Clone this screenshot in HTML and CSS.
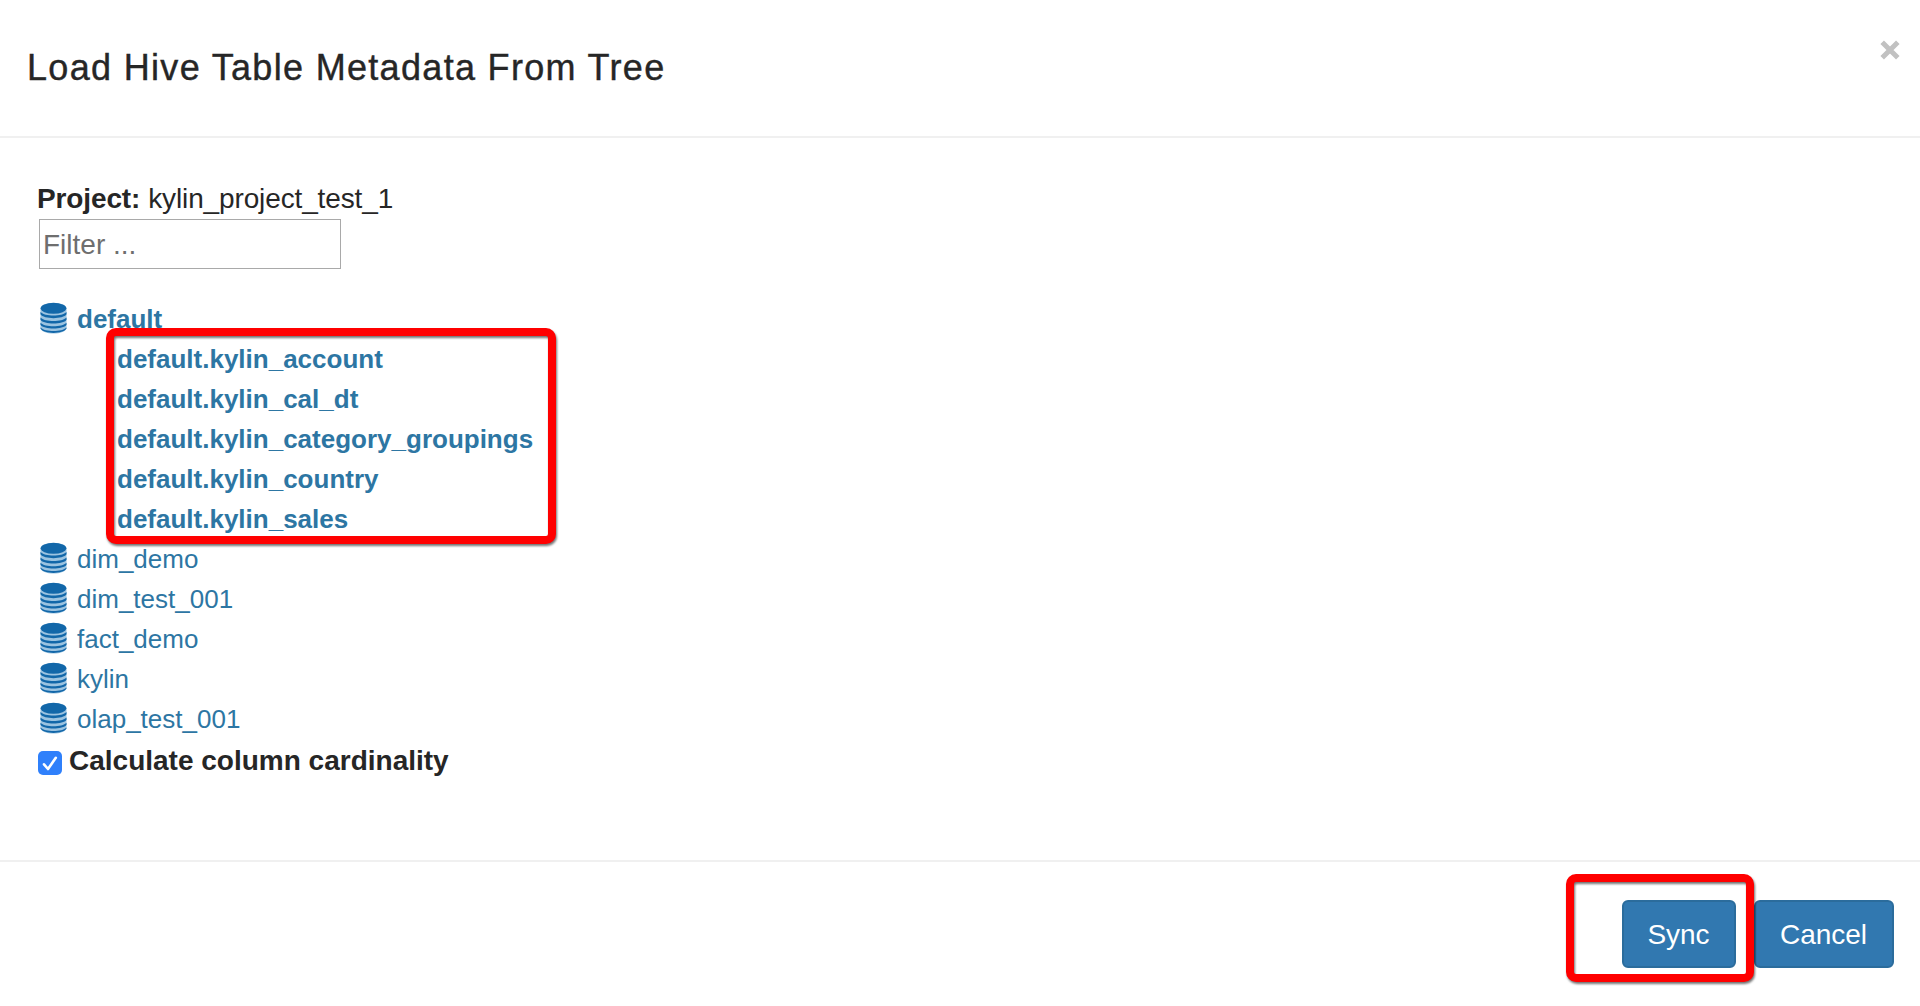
FILE: index.html
```html
<!DOCTYPE html>
<html lang="en">
<head>
<meta charset="utf-8">
<title>Load Hive Table Metadata From Tree</title>
<link rel="stylesheet" href="styles.css">
</head>
<body>
<svg class="defs" aria-hidden="true">
  <symbol id="db" viewBox="0 0 28 32">
    <path fill="#9cc3e0" d="M.5 6C.5-1.500 27.500-1.500 27.500 6V26C27.500 34 .5 34 .5 26Z"/>
    <ellipse cx="14" cy="6" rx="13.300" ry="5.700" fill="#1267a9"/>
    <g fill="#1267a9">
      <path d="M.5 9.800C5 14.700 23 14.700 27.500 9.800V12.200C24 17.500 4 17.500 .5 12.200Z"/>
      <path d="M.5 15.400C5 20.300 23 20.300 27.500 15.400V17.800C24 23.100 4 23.100 .5 17.800Z"/>
      <path d="M.5 20.800C5 25.700 23 25.700 27.500 20.800V23C24 28.300 4 28.300 .5 23Z"/>
      <path d="M.5 25.800C5 30.700 23 30.700 27.500 25.800V27C24 33 4 33 .5 27Z"/>
    </g>
  </symbol>
</svg>
<div class="modal">
  <header class="modal-header">
    <h1 class="title">Load Hive Table Metadata From Tree</h1>
    <button class="close" aria-label="Close"><svg width="20" height="20" viewBox="0 0 20 20"><path d="M2.200 2.200 17.800 17.800M17.800 2.200 2.200 17.800" stroke="#c1c1c1" stroke-width="5"/></svg></button>
  </header>
  <main class="modal-body">
    <div class="project"><b>Project:</b><span>kylin_project_test_1</span></div>
    <input class="filter" type="text" placeholder="Filter ...">
    <ul class="tree">
      <li class="node open"><svg class="db"><use href="#db"/></svg><span>default</span></li>
      <li>
        <ul class="children">
          <li>default.kylin_account</li>
          <li>default.kylin_cal_dt</li>
          <li>default.kylin_category_groupings</li>
          <li>default.kylin_country</li>
          <li>default.kylin_sales</li>
        </ul>
      </li>
      <li class="node"><svg class="db"><use href="#db"/></svg><span>dim_demo</span></li>
      <li class="node"><svg class="db"><use href="#db"/></svg><span>dim_test_001</span></li>
      <li class="node"><svg class="db"><use href="#db"/></svg><span>fact_demo</span></li>
      <li class="node"><svg class="db"><use href="#db"/></svg><span>kylin</span></li>
      <li class="node"><svg class="db"><use href="#db"/></svg><span>olap_test_001</span></li>
    </ul>
    <div class="cardinality">
      <span class="check"><svg width="24" height="24" viewBox="0 0 24 24"><path d="M6 13.300 10 18 17.800 6.800" fill="none" stroke="#fff" stroke-width="2.600" stroke-linecap="round" stroke-linejoin="round"/></svg></span>
      <b>Calculate column cardinality</b>
    </div>
  </main>
  <footer class="modal-footer">
    <div class="sync-wrap"><button class="btn sync">Sync</button></div>
    <button class="btn cancel">Cancel</button>
  </footer>
</div>
</body>
</html>
```

FILE: styles.css
```css
*, *::before, *::after { box-sizing: border-box; }
body {
  margin: 0;
  background: #fff;
  color: #262626;
  font-family: "Liberation Sans", Arial, sans-serif;
  font-size: 28px;
  line-height: 40px;
}
ul { list-style: none; margin: 0; padding: 0; }
.defs { display: none; }
.modal { height: 1006px; display: flex; flex-direction: column; overflow: hidden; }

.modal-header {
  height: 138px;
  flex: none;
  display: flex;
  justify-content: space-between;
  align-items: flex-start;
  padding: 48px 20px 0 27px;
  border-bottom: 2px solid #f0f0f0;
}
.title {
  margin: 0;
  font-size: 36px;
  font-weight: 400;
  letter-spacing: 1.32px;
  white-space: nowrap;
  -webkit-text-stroke: .4px #262626;
}
.close { border: 0; padding: 0; margin-top: -8px; background: none; display: flex; }

.modal-body { flex: none; height: 722px; padding: 41px 38px 0 37px; }
.project { display: flex; gap: 8px; letter-spacing: -.13px; }
.filter {
  display: block;
  width: 302px;
  height: 50px;
  margin: 0 0 30px 2px;
  padding: 1px 3px 0;
  border: 1px solid #a9a9a9;
  border-radius: 0;
  font: inherit;
}
.filter::placeholder { color: #6e6e6e; opacity: 1; }

.tree { color: #2d76a3; font-size: 26px; }
.node { display: flex; height: 40px; gap: 10px; padding-left: 3px; }
.open, .children { font-weight: 700; }
.db { width: 27px; height: 32px; margin-top: 3px; }
.children { position: relative; padding-left: 80px; }
.children li { height: 40px; }

/* Red highlight frames lie over the content */
.children::after, .sync-wrap::after {
  content: "";
  position: absolute;
  border: 8px solid #f00;
  border-radius: 10px;
  filter: drop-shadow(1px 2px 1px rgba(0, 0, 0, .55));
}
.children::after { left: 69px; top: -11px; width: 450px; height: 216px; }
.sync-wrap::after { left: -56px; top: -26px; width: 188px; height: 108px; z-index: 1; }

.cardinality { display: flex; gap: 7px; margin-top: 2px; padding-left: 1px; }
.check { width: 24px; height: 24px; margin-top: 10px; border-radius: 5px; background: #2f80fb; display: flex; }

.modal-footer {
  flex: 1;
  display: flex;
  justify-content: flex-end;
  align-items: flex-start;
  gap: 18px;
  padding: 38px 26px 0;
  border-top: 2px solid #f0f0f0;
}
.sync-wrap { position: relative; }
.btn {
  display: block;
  height: 68px;
  padding: 1px 1px 0 0;
  border: 2px solid #2b6c9c;
  border-radius: 6px;
  background: #3178b0;
  color: #fff;
  font: inherit;
}
.sync { width: 114px; }
.cancel { width: 140px; }
```
